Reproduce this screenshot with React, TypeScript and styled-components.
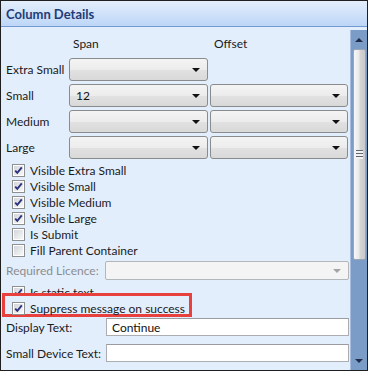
import React from 'react';
import styled, { createGlobalStyle } from 'styled-components';

const GlobalStyle = createGlobalStyle`
  html, body {
    margin: 0;
    padding: 0;
    background: #ffffff;
  }
  body {
    font-family: Lato, "Liberation Sans", sans-serif;
    font-size: 12px;
    color: #1b1b1b;
  }
`;

const Panel = styled.div`
  width: 368px;
  height: 371px;
  box-sizing: border-box;
  border: 1px solid #1f1f1f;
  display: flex;
  flex-direction: column;
  background: #e3eefd;
  overflow: hidden;
`;

const Header = styled.div`
  height: 25px;
  flex-shrink: 0;
  display: flex;
  align-items: center;
  padding-left: 5px;
  background: linear-gradient(#e4eefc, #bdd6f7);
  border-bottom: 1px solid #7398d4;
  font-size: 13px;
  font-weight: bold;
  color: #1e3c78;
`;

const Body = styled.div`
  flex: 1;
  display: flex;
  min-height: 0;
`;

const Content = styled.div`
  flex: 1;
  padding-left: 5px;
  display: flex;
  flex-direction: column;
`;

/* span / offset grid */
const SizeGrid = styled.div`
  display: grid;
  grid-template-columns: 61px 139px 138px;
  column-gap: 2px;
  row-gap: 3px;
  margin-top: 9px;
  align-items: center;
`;

const ColHead = styled.div`
  height: 16px;
  line-height: 16px;
  padding-left: 4px;
  margin-bottom: 3px;
`;

const Label = styled.div<{ $disabled?: boolean }>`
  white-space: nowrap;
  color: ${(p) => (p.$disabled ? '#8c8c8c' : '#1b1b1b')};
`;

const Select = styled.div`
  position: relative;
  height: 23px;
  box-sizing: border-box;
  border: 1px solid #8a8b8c;
  border-radius: 3px;
  background: linear-gradient(#f4f4f4 0%, #ececec 50%, #e1e1e1 52%, #d9d9d9 100%);
  display: flex;
  align-items: center;
  padding-left: 6px;
  color: #111;
`;

const Arrow = styled.span<{ $disabled?: boolean }>`
  position: absolute;
  right: 7px;
  top: 50%;
  margin-top: -2px;
  width: 0;
  height: 0;
  border-left: 4px solid transparent;
  border-right: 4px solid transparent;
  border-top: 4px solid ${(p) => (p.$disabled ? '#a4a4a4' : '#111')};
`;

/* checkbox list */
const CheckList = styled.div`
  margin-top: 3px;
  display: flex;
  flex-direction: column;
`;

const CheckRow = styled.div<{ $highlight?: boolean }>`
  height: 16px;
  display: flex;
  align-items: center;
  gap: 5px;
  padding-left: 6px;
  position: ${(p) => (p.$highlight ? 'relative' : 'static')};

  ${(p) =>
    p.$highlight &&
    `
    &::before {
      content: '';
      position: absolute;
      left: -4px;
      top: -7px;
      width: 190px;
      height: 24px;
      box-sizing: border-box;
      border: 3px solid #e8403c;
      background: #e3eefd;
    }
    & > * { position: relative; }
  `}
`;

const Box = styled.svg`
  flex-shrink: 0;
  display: block;
`;

/* field rows */
const FieldRow = styled.div<{ $top: number; $labelWidth: number; $height: number }>`
  display: grid;
  grid-template-columns: ${(p) => p.$labelWidth}px 1fr;
  align-items: center;
  margin-top: ${(p) => p.$top}px;
  height: ${(p) => p.$height}px;
  padding-right: 1px;
`;

const DisabledCombo = styled.div`
  position: relative;
  height: 19px;
  box-sizing: border-box;
  border: 1px solid #b3b6ba;
  border-radius: 2px;
  background: #f4f4f4;
`;

const TextInput = styled.div`
  height: 18px;
  box-sizing: border-box;
  border: 1px solid #abadb3;
  border-top-color: #9a9ca2;
  background: #ffffff;
  padding-left: 5px;
  display: flex;
  align-items: center;
  color: #111;
`;

/* scrollbar */
const ScrollBar = styled.div`
  width: 16px;
  margin-top: 3px;
  background: #7c9cc8;
  border-left: 1px solid #a6bddf;
  display: flex;
  flex-direction: column;
  align-items: center;
`;

const ScrollBtn = styled.div`
  height: 19px;
  width: 100%;
  display: flex;
  align-items: center;
  justify-content: center;
`;

const Tri = styled.span<{ $down?: boolean }>`
  width: 0;
  height: 0;
  border-left: 4px solid transparent;
  border-right: 4px solid transparent;
  ${(p) =>
    p.$down ? 'border-top: 4px solid #1f2d4a;' : 'border-bottom: 4px solid #1f2d4a;'}
`;

const Thumb = styled.div`
  width: 13px;
  height: 211px;
  margin-left: 1px;
  box-sizing: border-box;
  border: 1px solid #9aa6b6;
  border-radius: 2px;
  background: linear-gradient(90deg, #f7f7f7 0%, #e9e9e9 45%, #d4d4d4 55%, #c9c9c9 100%);
  display: flex;
  align-items: center;
  justify-content: center;
`;

const Grip = styled.div`
  width: 7px;
  height: 9px;
  background: repeating-linear-gradient(#5d6670 0 1px, #f2f2f2 1px 3px);
`;

const Track = styled.div`
  flex: 1;
`;

const Check: React.FC<{ checked?: boolean }> = ({ checked }) => (
  <Box width="13" height="13" viewBox="0 0 13 13">
    <defs>
      <linearGradient id="cbg" x1="0" y1="0" x2="1" y2="1">
        <stop offset="0" stopColor="#d2d5da" />
        <stop offset="1" stopColor="#f8f8f8" />
      </linearGradient>
    </defs>
    <rect x="0.5" y="0.5" width="12" height="12" fill="#fff" stroke="#8e8f8f" />
    <rect x="2" y="2" width="9" height="9" fill="url(#cbg)" />
    {checked && (
      <path d="M3.2 6.6 L5.3 8.9 L9.8 3.4" fill="none" stroke="#2e317c" strokeWidth="1.9" />
    )}
  </Box>
);

const sizes = ['Extra Small', 'Small', 'Medium', 'Large'];

const checks: { label: string; checked: boolean }[] = [
  { label: 'Visible Extra Small', checked: true },
  { label: 'Visible Small', checked: true },
  { label: 'Visible Medium', checked: true },
  { label: 'Visible Large', checked: true },
  { label: 'Is Submit', checked: false },
  { label: 'Fill Parent Container', checked: false },
];

const App: React.FC = () => {
  return (
    <>
      <GlobalStyle />
      <Panel>
        <Header>Column Details</Header>
        <Body>
          <Content>
            <SizeGrid>
              <div />
              <ColHead>Span</ColHead>
              <ColHead>Offset</ColHead>
              {sizes.map((s) => (
                <React.Fragment key={s}>
                  <Label>{s}</Label>
                  <Select>
                    {s === 'Small' ? '12' : ''}
                    <Arrow />
                  </Select>
                  {s === 'Extra Small' ? (
                    <div />
                  ) : (
                    <Select>
                      <Arrow />
                    </Select>
                  )}
                </React.Fragment>
              ))}
            </SizeGrid>

            <CheckList>
              {checks.map((c) => (
                <CheckRow key={c.label}>
                  <Check checked={c.checked} />
                  <span>{c.label}</span>
                </CheckRow>
              ))}
            </CheckList>

            <FieldRow $top={3} $labelWidth={99} $height={19}>
              <Label $disabled>Required Licence:</Label>
              <DisabledCombo>
                <Arrow $disabled />
              </DisabledCombo>
            </FieldRow>

            <CheckList style={{ marginTop: 4 }}>
              <CheckRow>
                <Check checked />
                <span>Is static text</span>
              </CheckRow>
              <CheckRow $highlight>
                <Check checked />
                <span>Suppress message on success</span>
              </CheckRow>
            </CheckList>

            <FieldRow $top={2} $labelWidth={100} $height={18}>
              <Label>Display Text:</Label>
              <TextInput>Continue</TextInput>
            </FieldRow>
            <FieldRow $top={8} $labelWidth={100} $height={18}>
              <Label>Small Device Text:</Label>
              <TextInput />
            </FieldRow>
          </Content>

          <ScrollBar>
            <ScrollBtn>
              <Tri />
            </ScrollBtn>
            <Thumb>
              <Grip />
            </Thumb>
            <Track />
            <ScrollBtn>
              <Tri $down />
            </ScrollBtn>
          </ScrollBar>
        </Body>
      </Panel>
    </>
  );
};

export default App;
